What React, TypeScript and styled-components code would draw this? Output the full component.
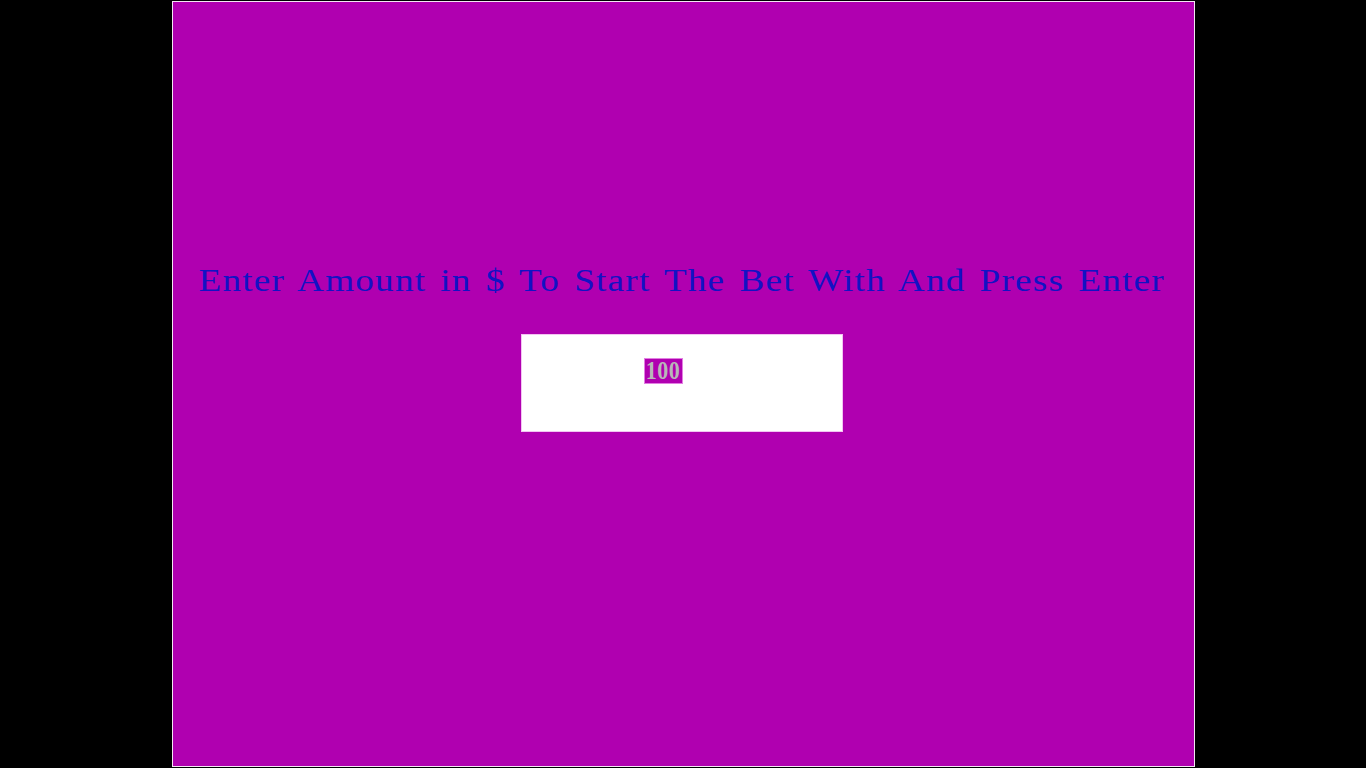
import React from "react";
import styled, { createGlobalStyle } from "styled-components";

const Global = createGlobalStyle`
  html, body { margin: 0; padding: 0; background: #000; }
  body { width: 1366px; height: 768px; overflow: hidden; }
`;

const Viewport = styled.div`
  width: 1366px;
  height: 768px;
  background: #000;
  display: flex;
  justify-content: center;
  align-items: flex-start;
`;

const Screen = styled.div`
  box-sizing: border-box;
  margin-top: 1px;
  width: 1023px;
  height: 766px;
  border: 1px solid #f4e6f4;
  background: #b000b0;
  display: flex;
  flex-direction: column;
  align-items: center;
  padding-top: 259px;
`;

const Prompt = styled.div`
  font-family: "Liberation Serif", "Times New Roman", serif;
  font-size: 31px;
  line-height: 40px;
  color: #1212c4;
  white-space: pre;
  letter-spacing: 1px;
  word-spacing: 3px;
  transform: scaleX(1.2);
  margin-right: 3px;
`;

const InputBox = styled.div`
  box-sizing: border-box;
  margin-top: 33px;
  margin-right: 3px;
  width: 322px;
  height: 98px;
  background: #fff;
  border: 1px solid #f2c4f2;
  padding: 23px 0 0 122px;
  display: flex;
  align-items: flex-start;
`;

const Selected = styled.span`
  box-sizing: border-box;
  display: flex;
  align-items: center;
  justify-content: center;
  width: 39px;
  height: 26px;
  background: #b000b0;
  border: 1px solid #e27ee2;
`;

const Value = styled.span`
  font-family: "Liberation Serif", "Times New Roman", serif;
  font-weight: bold;
  font-size: 22px;
  line-height: 20px;
  color: #b8b8b8;
  letter-spacing: 0.5px;
  transform: scaleY(1.1);
`;

export default function App() {
  return (
    <>
      <Global />
      <Viewport>
        <Screen>
          <Prompt>Enter Amount in $ To Start The Bet With And Press Enter</Prompt>
          <InputBox>
            <Selected>
              <Value>100</Value>
            </Selected>
          </InputBox>
        </Screen>
      </Viewport>
    </>
  );
}
